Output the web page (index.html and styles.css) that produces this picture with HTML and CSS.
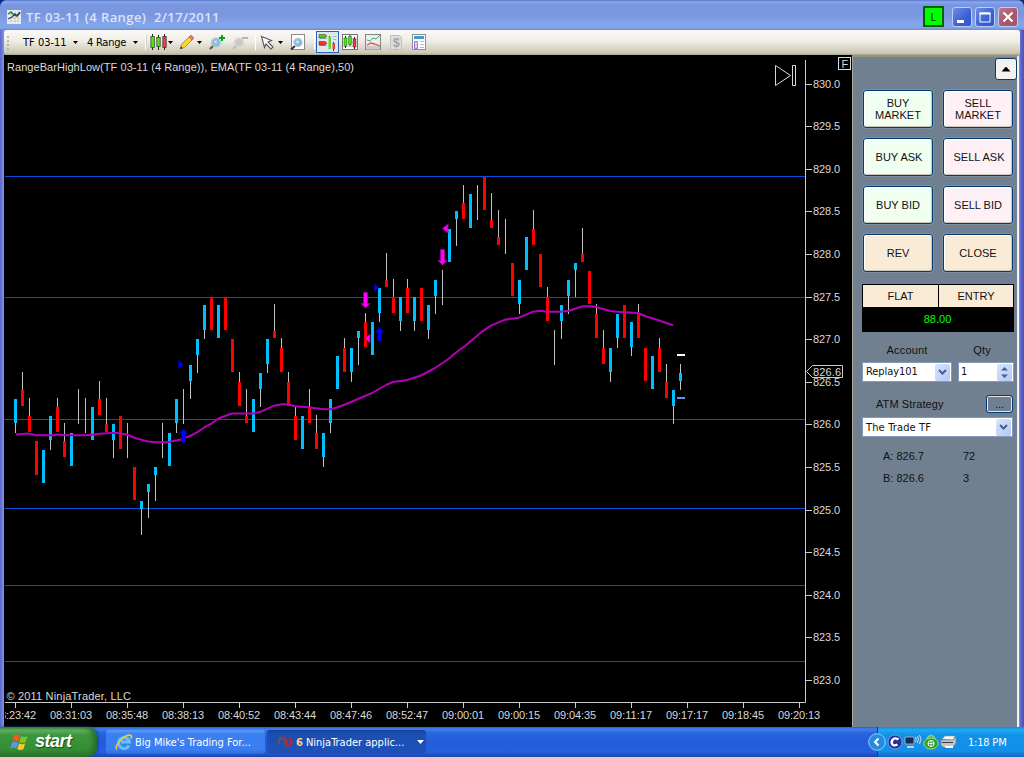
FILE: index.html
```html
<!DOCTYPE html>
<html lang="en">
<head>
<meta charset="utf-8">
<title>TF 03-11 (4 Range)</title>
<link rel="stylesheet" href="styles.css">
</head>
<body>
<div class="desktop">
  <div class="window">
    <header class="titlebar">
      <svg class="title-icon" width="14" height="14" viewBox="0 0 14 14"><rect x=".5" y=".5" width="13" height="13" fill="#f4f4ee" stroke="#e8e8e8"/><path d="M1 4h12M1 8h12M1 11h12M4 1v12M8 1v12M11 1v12" stroke="#b9bdb5" stroke-width=".7"/><path d="M1 4l3-2 3 3 3 1 3-3" fill="none" stroke="#168a28" stroke-width="1.5"/><path d="M1 9l4-2 3-3 2 2 3-4" fill="none" stroke="#233f86" stroke-width="1.3"/></svg>
      <h1 class="title">TF 03-11 (4 Range)&nbsp; 2/17/2011</h1>
      <span class="link-badge">L</span>
      <div class="caption-buttons">
        <button class="cap"><svg width="20" height="20"><rect x="5" y="13" width="7" height="3" fill="#fff"/></svg></button>
        <button class="cap"><svg width="20" height="20"><path d="M5 6h10v9H5z" fill="none" stroke="#fff"/><path d="M4.500 5.500h11v2h-11z" fill="#fff"/></svg></button>
        <button class="cap close"><svg width="20" height="20"><path d="M5.500 5.500l9 9M14.500 5.500l-9 9" stroke="#fff" stroke-width="2.200"/></svg></button>
      </div>
    </header>

    <div class="toolbar">
      <i class="grip"></i>
      <span class="tool-text t-inst">TF 03-11</span><i class="drop"></i>
      <span class="tool-text t-range">4 Range</span><i class="drop"></i>
      <svg class="tools" width="290" height="25" viewBox="140 30 290 25">
        <path d="M145.500 34v16M255.500 34v16M314.500 34v16" stroke="#fff"/><path d="M146.500 34v16" stroke="#d5d2c6"/>
        <path d="M152.500 34v16M158.500 35v15M164.500 34v16" stroke="#222"/>
        <g stroke="#333" stroke-width=".7"><rect x="150.900" y="36.500" width="3.400" height="11" fill="#51e60c"/><rect x="156.800" y="37.500" width="3.400" height="9" fill="#51e60c"/><rect x="162.800" y="36.500" width="3.400" height="11" fill="#e9423c"/></g>
        <path d="M168 41h5l-2.500 3zM197 41h5l-2.500 3zM278 41h5l-2.500 3z" fill="#000"/>
        <path d="M180.500 48.500l1-4 8-8 3 3-8 8z" fill="#f8d72e" stroke="#a67c13" stroke-width=".8"/><path d="M189 37l2-2 3 3-2 2z" fill="#ee746e" stroke="#b3564b" stroke-width=".6"/><path d="M180 49l1-2.500 1.700 1.700z" fill="#222"/>
        <path d="M214 45l-4 4" stroke="#555" stroke-width="2"/><circle cx="216" cy="42.500" r="4.300" fill="#82bbe3" stroke="#b9c4ca" stroke-width="1.400"/><circle cx="215.500" cy="42" r="1.800" fill="#b5dcf5"/><path d="M222 35v6M219 38h6" stroke="#0aa02b" stroke-width="2"/>
        <path d="M237 45l-4 4" stroke="#b9b9b5" stroke-width="2"/><circle cx="239" cy="42.500" r="4.300" fill="#c9c9c6" stroke="#d7d7d4" stroke-width="1.400"/><path d="M242 38h6" stroke="#b5b5b2" stroke-width="2"/>
        <path d="M261.500 36.500l10 4-3.500 1.500 5 5-2 2-5-5-1.500 3.500z" fill="#fff" stroke="#555" stroke-width="1.100"/>
        <rect x="291.500" y="34.500" width="13" height="15" fill="#fff" stroke="#8a8a86"/><path d="M295 46l-4 3.500" stroke="#333" stroke-width="2"/><circle cx="298" cy="42.500" r="4" fill="#7fb9e4" stroke="#b7c6cf" stroke-width="1.400"/><circle cx="297.500" cy="42" r="1.700" fill="#bbe1f7"/>
        <rect x="316.500" y="31.500" width="22" height="21" fill="#dfe7ee" stroke="#2a62bd"/>
        <path d="M320 38.500h7M320 45.500h7M333 36.500h3M333 39.500h3" stroke="#adb5b5"/><path d="M319 34.500h6l2 1.500-2 2h-6z" fill="#48cf14" stroke="#333" stroke-width=".5"/><path d="M319 41.500h6l2 1.700-2 2h-6z" fill="#ec3430" stroke="#433" stroke-width=".5"/><path d="M329.500 36v13" stroke="#245b18"/><rect x="328.500" y="37" width="2.500" height="12" fill="#55df1c"/><path d="M333.500 42v9" stroke="#552222"/><rect x="332.500" y="43" width="2.500" height="6" fill="#e8443d"/>
        <rect x="342.500" y="34.500" width="15" height="15" fill="#fafafa" stroke="#777"/><path d="M343 38.500h14M343 42.500h14M343 46.500h14" stroke="#ccc"/><path d="M345.500 36v12M350 35v11M354.500 37v12" stroke="#222"/><path d="M344 38h3v8h-3zM348.500 36.500h3v8h-3z" fill="#55e013" stroke="#263" stroke-width=".5"/><path d="M353 39h3v8h-3z" fill="#ee3933" stroke="#433" stroke-width=".5"/>
        <rect x="365.500" y="34.500" width="15" height="15" fill="#eceeed" stroke="#858582"/><path d="M366 45.500h14v4h-14z" fill="#ccc"/><path d="M367 40l3 1 3-3 3 1 4-4" fill="none" stroke="#52a776"/><path d="M367 45l4-2 4 1 5 2" fill="none" stroke="#d8504b" stroke-width="1.300"/>
        <path d="M390.500 35.500h9l2 2v12h-11z" fill="#dededa" stroke="#c0c0bb"/><text x="393" y="47" class="dollar">$</text>
        <rect x="412.500" y="34.500" width="13" height="15" fill="#fff" stroke="#8d8d8d"/><path d="M414 36h10v3h-10z" fill="#3b9ed2"/><path d="M414.500 41.500h3v7h-3z" fill="#ddc9ff" stroke="#a371ee"/><path d="M420 41.500h4M420 44.500h4M420 47.500h4" stroke="#bbb"/>
      </svg>
    </div>

    <main class="content">
      <svg id="chart" class="chart" width="847" height="672" viewBox="5 55 847 672">
        <g class="levels"><path d="M5 176.500H805M5 297.500H805M5 419.500H805M5 508.500H805M5 585.500H805M5 661.500H805"/></g>
        <g id="candles"></g>
        <path class="ema" d="M16 434.500L28 433.500 36 435.300 53 435.300 58 434.500 65 435.300 87 435.300 100 433.700 115 432.700 127 434.500 135 438 148 441.500 155 442.300 168 442.300 180 439.700 190 436 197 432.300 205 427 212 423.300 218 418.700 225 416 232 413.500 253 413.500 261 411.700 274 405.700 282 404.300 288 404.300 295 406.300 303 406.700 322 409 330 409.300 337 407.500 345 404.500 358 399 372 393 386 385 393 382 407 380 421 375.500 435 368 447 360 457 351.700 465 346 482 331.700 491 325.700 505 319.700 519 317.700 533 311.700 540 310.700 547 311.700 561 311.700 569 310.700 583 306.300 592 306.300 597 307.300 611 311.300 625 312.300 638 313 645 316 660 320.700 667 323.300 673 325.300"/>
        <g fill="#00f" stroke="#00009c" stroke-width=".8"><path d="M183.500 429l4.500 4.500h-2.500v9h-4v-9h-2.500zM379.500 327.500l4.500 4.500h-2.500v9h-4v-9h-2.500zM178.500 360.500v8l5-4zM374.500 284v7.500l4.500-3.800z"/></g>
        <g fill="#f0f" stroke="#95008f" stroke-width=".8"><path d="M365.500 308l4.500-4.500h-2.500v-11h-4v11h-2.500zM442.500 265l4.500-4.500h-2.500v-11h-4v11h-2.500zM370 334v9l-5-4.500zM448 224v9l-5.500-4.500z"/></g>
        <path d="M677 354h8v2h-8z" fill="#fff"/><path d="M677 397h8v2h-8z" fill="#6495ed"/>
        <path d="M805.500 60V702.500H5" class="axis"/>
        <g id="prices"></g><g id="times"></g>
        <path d="M806.500 371.500l6-6h30v12h-30z" fill="#000" stroke="#ccc"/><text x="813" y="376" textLength="28">826.6</text>
        <path d="M775.500 65.500v20l15-10zM792.500 65.500h3v20h-3z" fill="none" stroke="#d8d8d8"/>
        <rect x="838.500" y="57.500" width="12" height="12" fill="none" stroke="#ddd"/><text x="841.500" y="67.500">F</text>
        <text x="7" y="71" textLength="347">RangeBarHighLow(TF 03-11 (4 Range)), EMA(TF 03-11 (4 Range),50)</text>
        <text x="6.500" y="700" textLength="124.500">© 2011 NinjaTrader, LLC</text>
      </svg>

      <aside class="panel">
        <button class="collapse"><i></i></button>
        <div class="order-grid">
          <button class="order buy">BUY<br>MARKET</button><button class="order sell">SELL<br>MARKET</button>
          <button class="order buy">BUY ASK</button><button class="order sell">SELL ASK</button>
          <button class="order buy">BUY BID</button><button class="order sell">SELL BID</button>
          <button class="order neutral">REV</button><button class="order neutral">CLOSE</button>
        </div>
        <div class="position"><span>FLAT</span><span>ENTRY</span><b>88.00</b></div>
        <div class="account-row">
          <label class="field"><span>Account</span><span class="select">Replay101<i class="select-arrow"><svg width="9" height="7"><path d="M1 1l3.500 3.500L8 1" /></svg></i></span></label>
          <label class="field"><span>Qty</span><span class="select qty">1<i class="spin"><svg width="9" height="13"><path d="M1 4.500L4.500 1 8 4.500zM1 8.500L4.500 12 8 8.500z"/></svg></i></span></label>
        </div>
        <div class="atm-row"><span>ATM Strategy</span><button class="more">...</button></div>
        <span class="select atm">The Trade TF<i class="select-arrow"><svg width="9" height="7"><path d="M1 1l3.500 3.500L8 1"/></svg></i></span>
        <div class="quotes"><span>A: 826.7</span><span>72</span><span>B: 826.6</span><span>3</span></div>
      </aside>
    </main>
  </div>

  <footer class="taskbar">
    <div class="start">
      <svg width="19" height="18" viewBox="0 0 19 18"><path d="M4 2.500q3-2 6 0L8.300 8.500q-3-2-6 0z" fill="#ee5a24"/><path d="M11 3q3 2 6.500 0L15.500 9q-3 2-6.200 0z" fill="#7cc62a"/><path d="M2 9.700q3-2 6 0L6.300 15.500q-3-2-6 0z" fill="#5b95f2"/><path d="M9 10.200q3 2 6.200 0L13.500 16q-3 2-6.200 0z" fill="#f8c92b"/></svg>
      <span>start</span>
    </div>
    <div class="task">
      <svg width="18" height="17" viewBox="0 0 18 17"><path d="M14 11.500A5.500 5.500 0 1 1 14.500 8H6" fill="none" stroke="#62c3fb" stroke-width="3"/><path d="M2 15.500C-2 12 11-1 16 1.500c1 .6.500 2-.3 3" fill="none" stroke="#f5c83b" stroke-width="1.600"/></svg>
      <span class="task-a">Big Mike's Trading For...</span>
    </div>
    <div class="task active">
      <svg width="15" height="12" viewBox="0 0 15 12"><path d="M1 9C0 3 3 0 5.500 3S7 9 9 11" fill="none" stroke="#5b5560" stroke-width="2.400"/><path d="M5 1.500c4 0 2 7 5 8S15.500 5 11 1.500" fill="none" stroke="#a92c38" stroke-width="2.400"/></svg>
      <b>6</b><span class="task-b">NinjaTrader applic...</span><i class="task-drop"></i>
    </div>
    <div class="tray">
      <span class="expand"><svg width="18" height="18"><circle cx="9" cy="9" r="8.300" fill="#258be2" stroke="#8bd2fb"/><path d="M10.500 5.500L7 9l3.500 3.500" fill="none" stroke="#fff" stroke-width="2"/></svg></span>
      <svg class="tray-icons" width="72" height="18" viewBox="888 733 72 18">
        <circle cx="896" cy="742" r="7" fill="#20309a" stroke="#8295dc"/><path d="M899.500 739.500q-4-2.500-6 .5t.5 5q2 1 4.500-.5" fill="none" stroke="#fff" stroke-width="2.300"/>
        <path d="M906 737h9v7h-9z" fill="#1b2850" stroke="#9aa9c6"/><path d="M908 746h7v2h-7z" fill="#c7cdd8"/><path d="M916.500 737q1.500 2.500 0 5M918.500 736q2 3 0 7M920.500 735q3 4 0 9" fill="none" stroke="#d4d9df"/>
        <path d="M928.500 741v-3q3.500-5 7 0v3" fill="none" stroke="#87cf69" stroke-width="2"/><ellipse cx="932" cy="743.500" rx="7.200" ry="5.500" fill="#32a12b" stroke="#a5dc85"/><circle cx="932" cy="743.500" r="3" fill="#299124" stroke="#fff"/><path d="M929 743.500h6M932 740.500v6" stroke="#fff" stroke-width=".8"/>
        <path d="M943 739l3-3h10l-2 4z" fill="#f4f4f0" stroke="#999" stroke-width=".5"/><path d="M942 740h12l3-3v6l-3 4h-10l-2-2z" fill="#c5c6c9" stroke="#777b85" stroke-width=".6"/><path d="M943 742.500h11" stroke="#343843"/><path d="M945 746h9v2h-7z" fill="#fff"/>
      </svg>
      <time>1:18 PM</time>
    </div>
  </footer>
</div>
<script src="chart.js"></script>
</body>
</html>
```

FILE: styles.css
```css
* { box-sizing: border-box; }
body { margin: 0; background: #0a2a80; font: 11px "Liberation Sans", Arial, sans-serif; }
button { font: inherit; color: #111; padding: 0; margin: 0; }
svg { display: block; flex: none; }
.desktop { width: 1024px; height: 757px; display: flex; flex-direction: column; overflow: hidden; }

.window { height: 727px; display: flex; flex-direction: column; background: linear-gradient(90deg, #5b66cc, #8095e4 4px, #8095e4 1019px, #5a63ca 1021px, #4a50bd); border-radius: 7px 7px 0 0; overflow: hidden; }
.titlebar { height: 30px; flex: none; display: flex; align-items: center; padding: 3px 6px 0 7px; background: linear-gradient(#5779d2, #8ba7ea 2px, #7896e0 5px, #7b96df 15px, #83a6e9 24px, #82a4e8 28px, #7183cf); }
.title { margin: 1px auto 0 5px; font: 600 13px "Open Sans", sans-serif; color: #dae4fa; white-space: pre; letter-spacing: .42px; }
.link-badge { width: 21px; height: 21px; background: #0f0; border: 2px solid #075e07; display: grid; place-items: center; color: #063806; margin-right: 8px; }
.caption-buttons { display: flex; gap: 3px; }
.cap { width: 20px; height: 20px; border: 1px solid #c0cdf2; border-radius: 3px; background: linear-gradient(135deg, #6d8ee8, #3c60d3 60%, #3156c6); overflow: hidden; }
.cap svg { margin: -1px; }
.close { background: linear-gradient(135deg, #bf7887, #a95467 60%, #a45870); }

.toolbar { height: 25px; flex: none; margin: 0 4px; border-radius: 3px; background: linear-gradient(#fbfaf7, #eeece4 45%, #cbc8b6 92%, #a8a68c); display: flex; align-items: center; padding-left: 3px; font-family: "DejaVu Sans Condensed", "DejaVu Sans", sans-serif; }
.grip { width: 2px; height: 14px; background: repeating-linear-gradient(#bab7aa 0 2px, transparent 2px 4px); }
.tool-text { white-space: pre; color: #000; overflow: visible; }
.t-inst { width: 45px; margin-left: 14px; letter-spacing: 0; }
.t-range { width: 41px; margin-left: 9px; letter-spacing: -.25px; }
.drop { width: 5px; height: 3px; background: #000; clip-path: polygon(0 0, 100% 0, 50% 100%); margin-left: 5px; }
.tools { margin-left: 2px; }
.dollar { font: bold 12px "Liberation Sans", sans-serif; fill: #a3a39f; }

.content { height: 672px; flex: none; margin: 0 5px 0 4px; display: flex; padding-left: 1px; background: #000; }
.chart { background: #000; font: 11px "Liberation Sans", Arial, sans-serif; width: 847px; }
.chart text { fill: #d9d9d9; }
.levels { stroke: #0050dc; }
.ema { fill: none; stroke: #b400b4; stroke-width: 2; stroke-linejoin: round; }
.axis, .tick { fill: none; stroke: #ccc; }
.up { fill: #00bfff; }
.down { fill: #f00; }
.wick { fill: #c0c0c0; }

.panel { flex: 1; min-width: 0; background: #708090; border-left: 1px solid #aca899; border-top: 2px solid #97917f; border-right: 2px solid #f4f2ea; padding: 2px 2px 0 10px; display: flex; flex-direction: column; color: #111; }
.collapse { align-self: flex-end; flex: none; width: 22px; height: 22px; border: 1px solid #073d6e; border-radius: 3px; background: #f3f2ed; display: grid; place-items: center; margin-right: -2px; margin-top: -1px; }
.collapse i { width: 9px; height: 5px; background: #000; clip-path: polygon(50% 0, 100% 100%, 0 100%); }
.order-grid { display: grid; grid-template-columns: 70px 70px; gap: 10px; margin-top: 10px; }
.order { height: 38px; border: 1px solid #003c74; border-radius: 3px; line-height: 12px; font-size: 11px; box-shadow: inset -1px -1px 1px #c9c6bb, inset 1px 1px #fff, 0 0 0 1px #7e8fa0; }
.order:nth-child(3), .order:nth-child(4) { padding-left: 2px; }
.buy { background: #f0fff0; }
.sell { background: #fff0f5; }
.neutral { background: #faebd7; }
.position { display: grid; grid-template: 22px 23px / 75px 75px; column-gap: 1px; width: 152px; margin: 12px 0 0 -1px; padding: 1px 0 0 1px; background: #000; height: 48px; text-align: center; }
.position span { background: #faebd7; line-height: 22px; }
.position span + span { width: 74px; }
.position b { grid-column: 1 / 3; font-weight: normal; color: #0f0; line-height: 25px; padding-right: 2px; }
.account-row { display: flex; gap: 6px; margin: 10px 0 0 -1px; }
.field { display: flex; flex-direction: column; gap: 4px; text-align: center; line-height: 16px; }
.field > span:first-child { letter-spacing: .15px; }
.field:last-child > span:first-child { padding-right: 8px; }
.select { width: 90px; height: 20px; border: 1px solid #7f9db9; background: #fff; display: flex; align-items: center; padding: 0 1px 0 3px; font-family: "DejaVu Sans Condensed", "DejaVu Sans", sans-serif; letter-spacing: -.05px; color: #111; }
.qty { width: 56px; padding-left: 2px; }
.select-arrow, .spin { margin-left: auto; width: 15px; height: 17px; background: linear-gradient(135deg, #d8e4fe, #b3c8f5); border-radius: 2px; display: grid; place-items: center; }
.select-arrow path { fill: none; stroke: #44608c; stroke-width: 2; }
.spin path { fill: #44608c; }
.atm-row { height: 20px; margin-top: 12px; display: flex; align-items: center; justify-content: space-between; padding-left: 13px; }
.atm-row span { letter-spacing: .1px; }
.more { width: 27px; height: 18px; background: #708090; border: 1px solid #003c74; border-radius: 3px; box-shadow: inset 0 0 0 1px #e8e8e4; line-height: 10px; margin-right: 2px; }
.atm { width: 151px; margin: 3px 0 0 -1px; letter-spacing: .15px; }
.quotes { display: grid; grid-template-columns: 80px 40px; row-gap: 9px; line-height: 13px; margin: 13px 0 0 20px; }

.taskbar { height: 30px; background: linear-gradient(#2a5bc9, #3c83f0 2px, #2a64de 6px, #245cda 14px, #255fdf 25px, #1c47a8); display: flex; }
.start { width: 97px; height: 30px; border-radius: 0 10px 10px 0; background: linear-gradient(#358a36, #65b362 3px, #3c963c 8px, #358e36 22px, #2c752d); box-shadow: inset -4px 0 5px #286c2b, 1px 0 3px #173c91; display: flex; align-items: center; padding-left: 10px; gap: 6px; color: #fff; font: italic bold 18px "Liberation Sans", sans-serif; letter-spacing: -.5px; text-shadow: 1px 1px 1px #174b18; }
.start span { margin-top: -2px; }
.task { width: 159px; height: 24px; margin: 3px 0 0 9px; border-radius: 3px; background: linear-gradient(#5a9cf8, #3b80f3 4px, #3a7df1 20px, #2e68dc); display: flex; align-items: center; padding: 0 5px 0 9px; color: #fff; font-family: "DejaVu Sans Condensed", "DejaVu Sans", sans-serif; white-space: nowrap; }
.task-a { margin-left: 2px; letter-spacing: 0; }
.active { margin-left: 2px; background: linear-gradient(#183f95, #1c4eb2 4px, #1e52b9); padding-left: 11px; }
.active b { color: #ffd18a; margin: 0 3px 0 3px; }
.task-b { letter-spacing: 0; }
.task-drop { width: 7px; height: 4px; background: #fff; clip-path: polygon(0 0, 100% 0, 50% 100%); margin-left: auto; margin-right: -3px; }
.tray { width: 147px; margin-left: auto; border-left: 1px solid #16368d; background: linear-gradient(#168ad8, #1eaaf4 3px, #1191e7 8px, #1290e9 24px, #1068bd); display: flex; align-items: center; color: #fff; font-family: "DejaVu Sans Condensed", "DejaVu Sans", sans-serif; }
.expand { margin-left: -10px; }
.tray-icons { margin-left: 1px; }
.tray time { margin-left: 9px; letter-spacing: -.2px; white-space: nowrap; }
```

FILE: chart.js
```js
// Each bar: [direction, bar top, bar bottom, body top, body bottom]; 0 = doji
const bars = [
  [1,399,433,399,423],[-1,372,406,390,406],[-1,398,432,416,432],[-1,441,475,441,475],[1,450,483,450,483],
  [1,416,450,416,440],[-1,398,432,407,432],[-1,423,457,441,457],[1,433,466,433,466],[0,389,424],
  [0,398,433],[1,407,440,407,440],[-1,381,415,399,415],[-1,398,432,424,432],[1,424,458,424,440],
  [-1,416,449,416,449],[0,423,458],[-1,467,500,467,500],[1,501,535,501,509],[1,484,518,484,492],
  [1,467,501,467,475],[0,423,458],[1,433,466,433,466],[1,399,433,399,423],[0,389,424],
  [1,365,399,365,381],[1,339,373,339,355],[1,305,339,305,330],[-1,297,330,297,330],[1,305,338,305,338],
  [-1,297,330,297,330],[-1,339,372,339,372],[-1,372,406,382,406],[-1,389,423,416,423],[1,399,432,399,432],
  [1,373,407,373,389],[1,339,373,339,364],[-1,304,338,331,338],[-1,338,372,348,372],[-1,372,406,382,406],
  [-1,407,440,416,440],[1,416,449,416,449],[-1,389,423,407,423],[-1,415,449,433,449],[1,433,467,433,457],
  [1,399,433,399,423],[1,356,389,356,389],[-1,338,372,348,372],[1,348,382,348,372],[1,331,365,331,338],
  [-1,313,347,322,347],[1,322,355,322,355],[1,288,322,288,313],[-1,253,287,280,287],[-1,279,313,297,313],
  [1,297,331,297,321],[-1,279,313,288,313],[1,297,331,297,321],[-1,288,321,288,321],[1,305,339,305,330],
  [1,280,314,280,296],[0,270,305],[1,229,262,229,262],[1,211,246,211,219],[-1,185,219,203,219],
  [1,194,228,194,228],[0,185,220],[-1,177,210,177,210],[-1,193,228,220,228],[-1,210,245,237,245],
  [0,219,254],[-1,263,296,263,296],[1,280,314,280,304],[1,237,270,237,270],[-1,210,245,229,245],
  [-1,254,287,254,287],[-1,287,321,297,321],[0,330,365],[1,305,339,305,321],[1,280,314,280,296],
  [1,263,297,263,270],[-1,228,262,254,262],[-1,271,304,271,304],[-1,304,338,314,338],[-1,330,364,348,364],
  [1,348,382,348,372],[1,314,348,314,338],[-1,305,338,305,338],[1,322,356,322,347],[-1,304,338,313,338],
  [-1,348,381,348,381],[1,356,389,356,389],[-1,338,372,348,372],[-1,364,398,382,398],[1,390,424,390,406],
  [1,364,390,373,381]
];
const ns = 'http://www.w3.org/2000/svg';
function add(parent, tag, attrs, text) {
  const el = document.createElementNS(ns, tag);
  for (const key in attrs) el.setAttribute(key, attrs[key]);
  if (text) el.textContent = text;
  parent.appendChild(el);
}

const candles = document.getElementById('candles');
bars.forEach(([dir, top, bottom, bodyTop, bodyBottom], i) => {
  const x = 15 + i * 7;
  add(candles, 'rect', { x, y: top, width: 1, height: bottom - top, class: 'wick' });
  if (dir) add(candles, 'rect', { x: x - 1, y: bodyTop, width: 3, height: bodyBottom - bodyTop, class: dir > 0 ? 'up' : 'down' });
});

const prices = document.getElementById('prices');
for (let i = 0; i < 15; i++) {
  const y = Math.round(83.5 + i * 42.6);
  add(prices, 'path', { d: `M806 ${y + .5}h6`, class: 'tick' });
  add(prices, 'text', { x: 813, y: y + 4, textLength: 27 }, (830 - i / 2).toFixed(1));
}

const times = document.getElementById('times');
['08:23:42','08:31:03','08:35:48','08:38:13','08:40:52','08:43:44','08:47:46','08:52:47','09:00:01','09:00:15','09:04:35','09:11:17','09:17:17','09:18:45','09:20:13'].forEach((label, i) => {
  const x = 15 + i * 56;
  add(times, 'path', { d: `M${x + .5} 703v5`, class: 'tick' });
  add(times, 'text', { x: x - 21, y: 719, textLength: 42 }, label);
});
```
